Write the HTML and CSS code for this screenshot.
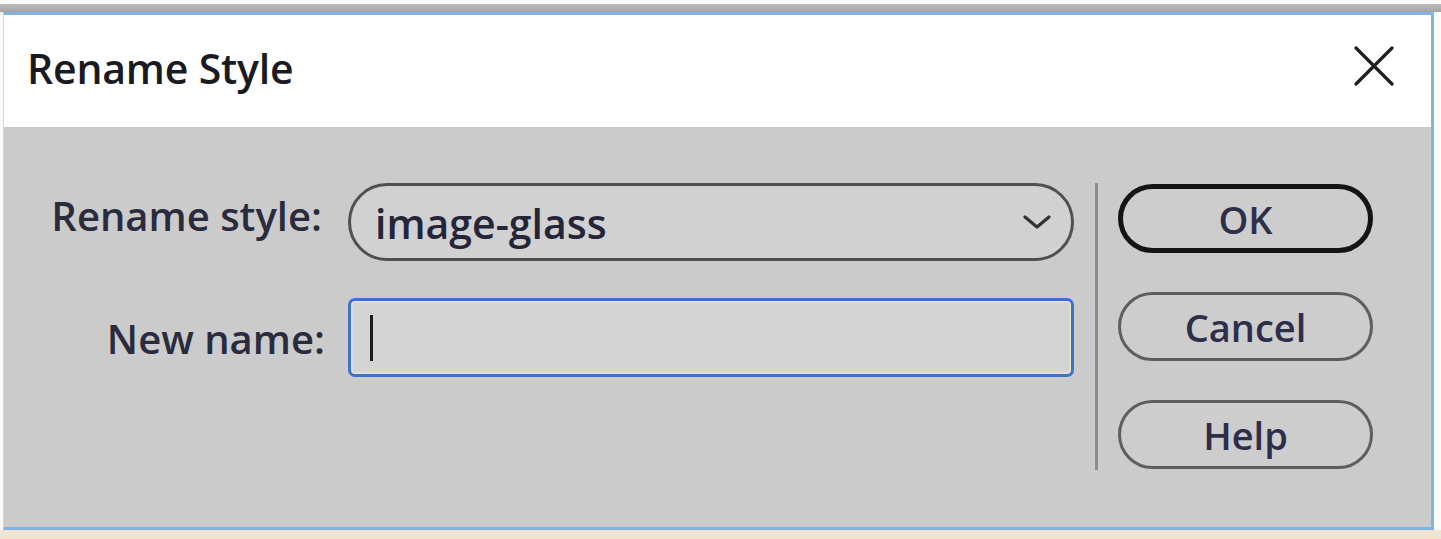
FILE: index.html
```html
<!DOCTYPE html>
<html lang="en">
<head>
<meta charset="utf-8">
<title>Rename Style</title>
<link rel="stylesheet" href="styles.css">
</head>
<body>
<div class="page">
  <div class="top-strip"></div>
  <div class="dialog">
    <div class="titlebar">
      <span class="title">Rename Style</span>
      <svg class="close" width="40" height="40" viewBox="0 0 40 40" aria-hidden="true">
        <path d="M2 2 L38 38 M38 2 L2 38" stroke="#1e1e1e" stroke-width="3.2" stroke-linecap="round" fill="none"/>
      </svg>
    </div>
    <div class="content">
      <div class="form">
        <label class="label label-top">Rename style:</label>
        <div class="select">
          <span class="select-text">image-glass</span>
          <svg class="chevron" width="28" height="16" viewBox="0 0 28 16" aria-hidden="true">
            <path d="M2 3 L14 13 L26 3" stroke="#333333" stroke-width="3.2" stroke-linecap="round" stroke-linejoin="round" fill="none"/>
          </svg>
        </div>
        <label class="label label-bottom">New name:</label>
        <div class="input"><span class="caret"></span></div>
      </div>
      <div class="separator"></div>
      <div class="buttons">
        <div class="btn btn-default">OK</div>
        <div class="btn">Cancel</div>
        <div class="btn">Help</div>
      </div>
    </div>
  </div>
  <div class="bottom-strip"></div>
</div>
</body>
</html>
```

FILE: styles.css
```css
html, body {
  margin: 0;
  padding: 0;
  background: #fbfbfb;
}

.page {
  width: 1441px;
  height: 539px;
  overflow: hidden;
  font-family: "Open Sans", "Noto Sans", sans-serif;
}

.top-strip {
  height: 8px;
  margin-top: 4px;
  background: linear-gradient(#bcbcbc, #a4a4a4);
}

.dialog {
  margin-left: 3px;
  width: 1427px;
  border-top: 3px solid #82b4e2;
  border-bottom: 3px solid #82b4e2;
  border-right: 3px solid #82b4e2;
  border-left: 1px solid #d8d8d8;
  display: flex;
  flex-direction: column;
}

.titlebar {
  height: 112px;
  background: #ffffff;
  display: flex;
  align-items: center;
  justify-content: space-between;
  padding: 0 37px 0 23px;
}

.title {
  font-size: 41px;
  font-weight: 600;
  letter-spacing: -0.2px;
  color: #1a1a22;
  margin-top: -6px;
}

.close {
  display: block;
  margin-top: -10px;
}

.content {
  height: 400px;
  background: #cbcbcb;
  display: flex;
  align-items: flex-start;
  padding-top: 56px;
  box-sizing: border-box;
}

.form {
  display: grid;
  grid-template-columns: 318px 726px;
  column-gap: 26px;
  row-gap: 37px;
  align-items: center;
}

.label {
  text-align: right;
  font-size: 40px;
  font-weight: 600;
  color: #2b2b3e;
}

.label-top {
  margin-top: -14px;
}

.label-bottom {
  margin-right: -3px;
  margin-top: 2px;
}

.select {
  height: 78px;
  box-sizing: border-box;
  border: 3px solid #505050;
  border-radius: 40px;
  background: #d1d1d1;
  display: flex;
  align-items: center;
  justify-content: space-between;
  padding: 0 20px 0 24px;
}

.select-text {
  font-size: 41px;
  font-weight: 600;
  color: #25253a;
  margin-top: 2px;
}

.chevron {
  display: block;
}

.input {
  height: 79px;
  box-sizing: border-box;
  border: 3px solid #3b73c9;
  border-radius: 7px;
  background: #d4d4d4;
  box-shadow: inset 0 0 0 1.5px #ece3d0;
  display: flex;
  align-items: center;
  padding-left: 19px;
}

.caret {
  display: block;
  width: 3px;
  height: 46px;
  background: #1c1c1c;
}

.separator {
  width: 3px;
  height: 287px;
  background: #8c8c8c;
  margin-left: 21px;
}

.buttons {
  display: flex;
  flex-direction: column;
  gap: 39px;
  margin-left: 20px;
  margin-top: 1px;
}

.btn {
  width: 255px;
  height: 69px;
  box-sizing: border-box;
  border: 3px solid #5e5e5e;
  border-radius: 35px;
  display: flex;
  align-items: center;
  justify-content: center;
  font-size: 38px;
  font-weight: 600;
  color: #2e2e4a;
  background: #cdcdcd;
}

.btn-default {
  border: 5px solid #141414;
}

.bottom-strip {
  height: 9px;
  background: #efe5d2;
}
```
